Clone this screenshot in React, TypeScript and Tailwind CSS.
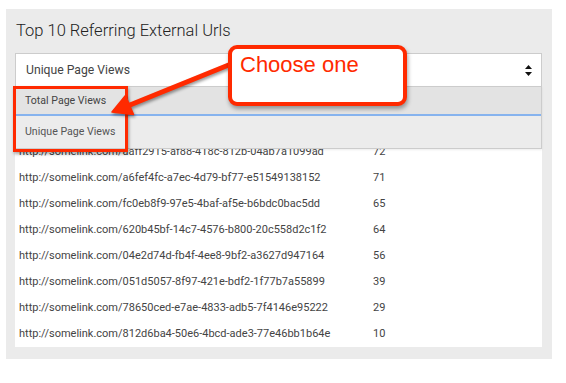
import React from "react";

const rows: [string, number][] = [
  ["http://somelink.com/3b1f7c2e-9a4d-4e61-b0c8-5d2e7f9a1c34", 128],
  ["http://somelink.com/e7d2a915-63bc-4f08-a1e4-0c9b8d7f2a61", 97],
  ["http://somelink.com/aaff2915-af88-418c-812b-04ab7a1099ad", 72],
  ["http://somelink.com/a6fef4fc-a7ec-4d79-bf77-e51549138152", 71],
  ["http://somelink.com/fc0eb8f9-97e5-4baf-af5e-b6bdc0bac5dd", 65],
  ["http://somelink.com/620b45bf-14c7-4576-b800-20c558d2c1f2", 64],
  ["http://somelink.com/04e2d74d-fb4f-4ee8-9bf2-a3627d947164", 56],
  ["http://somelink.com/051d5057-8f97-421e-bdf2-1f77b7a55899", 39],
  ["http://somelink.com/78650ced-e7ae-4833-adb5-7f4146e95222", 29],
  ["http://somelink.com/812d6ba4-50e6-4bcd-ade3-77e46bb1b64e", 10],
];

export default function App() {
  return (
    <div
      className="relative w-[566px] h-[383px] bg-white overflow-hidden"
      style={{ fontFamily: "Roboto, 'Liberation Sans', sans-serif" }}
    >
      <div className="ml-[6px] mt-[9px] w-[546px] h-[350px] bg-[#ebebeb] pl-[9px] pr-[10px] pt-[10px]">
        <div className="h-[24px] leading-[24px] text-[16.5px] font-light text-[#222] pl-[1px]">
          Top 10 Referring External Urls
        </div>
        <div className="mt-[10px] h-[34px] border border-[#cccccc] bg-white flex items-center justify-between pl-[10px] pr-[9px] text-[12.2px] text-[#444]">
          <span>Unique Page Views</span>
          <svg width="7" height="11" viewBox="0 0 7 11">
            <path d="M3.5 0 L7 4 L0 4 Z" fill="#111" />
            <path d="M3.5 11 L7 7 L0 7 Z" fill="#111" />
          </svg>
        </div>
        <div className="relative bg-white">
          {rows.map(([url, n]) => (
            <div
              key={url}
              className="h-[26px] flex items-center text-[11px] text-[#444] pl-[4px]"
            >
              <span className="w-[354px] shrink-0">{url}</span>
              <span>{n}</span>
            </div>
          ))}
          <div className="absolute left-0 right-0 top-[-1px] h-[63px] border border-[#cccccc] bg-[#ececec] flex flex-col shadow-[0_1px_2px_rgba(0,0,0,0.08)]">
            <div className="h-[27px] bg-[#e3e3e3] flex items-center pl-[9px] text-[10.6px] text-[#444]">
              Total Page Views
            </div>
            <div className="h-[2px] bg-[#86b3ee]" />
            <div className="flex-1 flex items-center pl-[9px] text-[10.6px] text-[#555]">
              Unique Page Views
            </div>
          </div>
        </div>
      </div>

      {/* red highlight around options */}
      <div className="absolute left-[13px] top-[86px] w-[115px] h-[66px] border-[3px] border-[#ff2a00] shadow-[1px_2px_3px_rgba(0,0,0,0.35)]" />

      {/* arrow */}
      <svg
        className="absolute left-0 top-0"
        width="566"
        height="383"
        style={{ filter: "drop-shadow(1px 2px 1.5px rgba(0,0,0,0.4))" }}
      >
        <line x1="125" y1="107" x2="236" y2="62" stroke="#ff2a00" strokeWidth="5" />
        <path d="M112 112 L125.5 95.5 L133.5 114.5 Z" fill="#ff2a00" stroke="#ff2a00" strokeWidth="1.5" strokeLinejoin="round" />
      </svg>

      {/* callout */}
      <div
        className="absolute left-[228px] top-[45px] w-[179px] h-[61px] bg-white border-[4px] border-[#ff2a00] rounded-[9px] shadow-[1px_3px_4px_rgba(0,0,0,0.35)] pl-[8px] pt-[3px] text-[22px] leading-[26px] text-[#ff2a00]"
        style={{ fontFamily: "'Liberation Sans', Arial, sans-serif" }}
      >
        Choose one
      </div>
    </div>
  );
}
